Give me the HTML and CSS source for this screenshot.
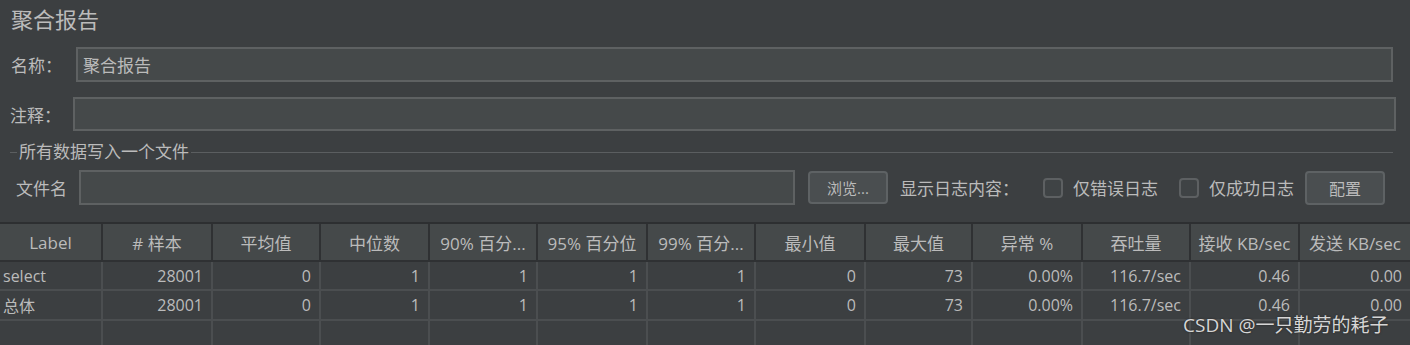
FILE: index.html
```html
<!DOCTYPE html>
<html lang="zh">
<head>
    <meta charset="UTF-8">
    <title>聚合报告</title>
    <link rel="stylesheet" href="styles.css">
</head>
<body>
    <div class="panel">
        <h1 class="title">聚合报告</h1>

        <div class="field name-row">
            <label for="nameInput">名称：</label>
            <input type="text" id="nameInput" class="text-input" value="聚合报告">
        </div>

        <div class="field comment-row">
            <label for="commentInput">注释：</label>
            <input type="text" id="commentInput" class="text-input" value="">
        </div>

        <div class="group">
            <div class="group-title"><span class="dash"></span><span class="legend">所有数据写入一个文件</span><span class="rule"></span></div>
            <div class="file-row">
                <label for="fileInput" class="file-label">文件名</label>
                <input type="text" id="fileInput" class="text-input file-input" value="">
                <button class="btn browse-btn">浏览...</button>
                <span class="log-label">显示日志内容：</span>
                <span class="check"></span>
                <span class="check-text">仅错误日志</span>
                <span class="check"></span>
                <span class="check-text">仅成功日志</span>
                <button class="btn config-btn">配置</button>
            </div>
        </div>
    </div>

    <table class="results">
        <colgroup>
            <col style="width:103px"><col style="width:110px"><col style="width:108px"><col style="width:109px">
            <col style="width:108px"><col style="width:110px"><col style="width:108px"><col style="width:110px">
            <col style="width:107px"><col style="width:110px"><col style="width:108px"><col style="width:109px">
            <col style="width:110px">
        </colgroup>
        <thead>
            <tr>
                <th>Label</th>
                <th># 样本</th>
                <th>平均值</th>
                <th>中位数</th>
                <th>90% 百分...</th>
                <th>95% 百分位</th>
                <th>99% 百分...</th>
                <th>最小值</th>
                <th>最大值</th>
                <th>异常 %</th>
                <th>吞吐量</th>
                <th>接收 KB/sec</th>
                <th>发送 KB/sec</th>
            </tr>
        </thead>
        <tbody>
            <tr>
                <td class="label-cell">select</td>
                <td>28001</td><td>0</td><td>1</td><td>1</td><td>1</td><td>1</td>
                <td>0</td><td>73</td><td>0.00%</td><td>116.7/sec</td><td>0.46</td><td>0.00</td>
            </tr>
            <tr>
                <td class="label-cell">总体</td>
                <td>28001</td><td>0</td><td>1</td><td>1</td><td>1</td><td>1</td>
                <td>0</td><td>73</td><td>0.00%</td><td>116.7/sec</td><td>0.46</td><td>0.00</td>
            </tr>
            <tr class="empty">
                <td></td><td></td><td></td><td></td><td></td><td></td><td></td>
                <td></td><td></td><td></td><td></td><td></td><td></td>
            </tr>
        </tbody>
    </table>

    <div class="watermark">CSDN @一只勤劳的耗子</div>
</body>
</html>
```

FILE: styles.css
```css
body {
    margin: 0;
    background-color: #3c3f41;
    color: #bbbbbb;
    font-family: "Open Sans", "Noto Sans CJK SC", sans-serif;
    font-size: 17px;
    position: relative;
    height: 345px;
    overflow: hidden;
}
.panel {
    padding: 0;
}
.title {
    margin: 4px 0 0 11px;
    font-size: 22px;
    font-weight: normal;
    line-height: 30px;
    height: 30px;
}
.field {
    display: flex;
    align-items: center;
}
.field label {
    flex: none;
    line-height: 20px;
    padding-top: 3px;
}
.text-input {
    box-sizing: border-box;
    height: 35px;
    background-color: #45494a;
    border: 2px solid #5e6162;
    color: #bbbbbb;
    font-family: "Open Sans", "Noto Sans CJK SC", sans-serif;
    font-size: 17px;
    padding: 0 5px;
    outline: none;
    margin: 0;
}
.name-row {
    margin-top: 13px;
    padding-left: 11px;
}
.name-row label {
    width: 65px;
}
.name-row .text-input {
    width: 1317px;
}
.comment-row {
    margin-top: 15px;
    padding-left: 10px;
}
.comment-row label {
    width: 63px;
}
.comment-row .text-input {
    width: 1323px;
    height: 34px;
}
.group {
    margin-top: 11px;
}
.group-title {
    display: flex;
    align-items: center;
    height: 20px;
    padding-left: 10px;
    width: 1383px;
}
.group-title .dash {
    width: 7px;
    height: 1px;
    background-color: #5b5e60;
}
.group-title .legend {
    padding: 0 2px 0 2px;
    line-height: 20px;
}
.group-title .rule {
    flex: 1;
    height: 1px;
    background-color: #5b5e60;
}
.file-row {
    display: flex;
    align-items: center;
    margin-top: 8px;
    padding-left: 16px;
}
.file-label {
    width: 63px;
    flex: none;
}
.file-input {
    width: 716px;
    flex: none;
}
.btn {
    box-sizing: border-box;
    height: 33px;
    width: 80px;
    background-color: #4a4e50;
    border: 2px solid #5e6264;
    border-radius: 4px;
    color: #bbbbbb;
    font-family: "Open Sans", "Noto Sans CJK SC", sans-serif;
    padding: 0;
    flex: none;
}
.browse-btn {
    margin-left: 13px;
    font-size: 15px;
}
.config-btn {
    margin-left: 11px;
    height: 34px;
    font-size: 16px;
}
.log-label {
    margin-left: 12px;
}
.check {
    box-sizing: border-box;
    width: 20px;
    height: 20px;
    border: 2px solid #5d6062;
    border-radius: 4px;
    background-color: #3f4345;
    margin-left: 24px;
    flex: none;
}
.check-text {
    margin-left: 10px;
}
.check-text + .check {
    margin-left: 21px;
}
.results {
    margin-top: 17px;
    width: 1410px;
    table-layout: fixed;
    border-collapse: separate;
    border-spacing: 0;
    border-top: 2px solid #2d2f31;
    font-size: 16px;
}
.results th {
    height: 36px;
    padding: 0;
    background-color: #45494a;
    font-weight: normal;
    text-align: center;
    border-right: 2px solid #2f3133;
    border-bottom: 2px solid #2f3133;
    white-space: nowrap;
    overflow: hidden;
    font-size: 17px;
}
.results td {
    height: 27px;
    padding: 0 8px 0 0;
    text-align: right;
    border-right: 2px solid #4b4e50;
    border-bottom: 2px solid #4b4e50;
    white-space: nowrap;
    overflow: hidden;
}
.results td.label-cell {
    text-align: left;
    padding-left: 3px;
}
.results tr:nth-child(2) td {
    height: 28px;
}
.results tr.empty td {
    height: 30px;
}
.results th:last-child,
.results td:last-child {
    border-right: none;
}
.watermark {
    position: absolute;
    left: 1183px;
    top: 311px;
    font-size: 19px;
    line-height: 28px;
    color: #d6d6d6;
    text-shadow: 0 0 2px #222222;
    white-space: nowrap;
}
```
